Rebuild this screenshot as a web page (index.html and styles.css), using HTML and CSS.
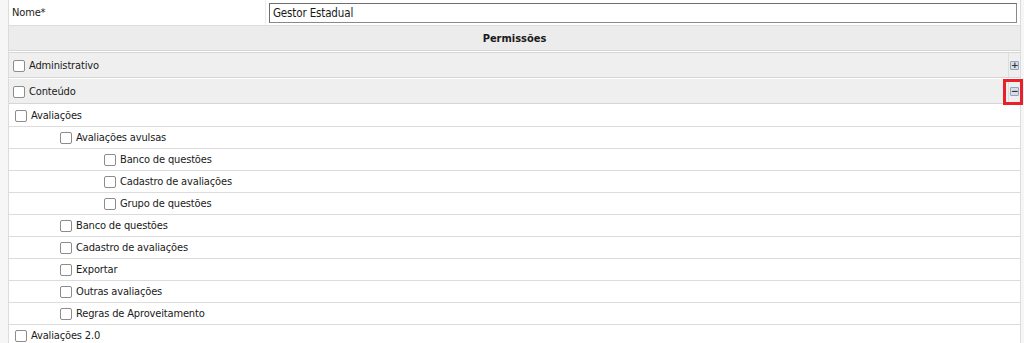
FILE: index.html
```html
<!DOCTYPE html>
<html>

<head>
    <title>Perfil</title>
    <meta name="viewport" content="width=device-width, initial-scale=1">
    <link rel="stylesheet" href="styles.css">
</head>

<body>
    <div class="page">
        <div class="form-row">
            <div class="label-cell">Nome*</div>
            <div class="value-cell">
                <input class="text-input" type="text" value="Gestor Estadual">
            </div>
        </div>

        <div class="section-title">Permissões</div>

        <div class="group-row">
            <label class="group-label"><span class="check"></span>Administrativo</label>
            <div class="toggle-cell"><span class="toggle">+</span></div>
        </div>

        <div class="group-row">
            <label class="group-label"><span class="check"></span>Conteúdo</label>
            <div class="toggle-cell">
                <span class="toggle">−</span>
                <span class="highlight"></span>
            </div>
        </div>

        <div class="tree">
            <div class="item lvl0"><span class="check"></span>Avaliações</div>
            <div class="item lvl1"><span class="check"></span>Avaliações avulsas</div>
            <div class="item lvl2"><span class="check"></span>Banco de questões</div>
            <div class="item lvl2"><span class="check"></span>Cadastro de avaliações</div>
            <div class="item lvl2"><span class="check"></span>Grupo de questões</div>
            <div class="item lvl1"><span class="check"></span>Banco de questões</div>
            <div class="item lvl1"><span class="check"></span>Cadastro de avaliações</div>
            <div class="item lvl1"><span class="check"></span>Exportar</div>
            <div class="item lvl1"><span class="check"></span>Outras avaliações</div>
            <div class="item lvl1"><span class="check"></span>Regras de Aproveitamento</div>
            <div class="item lvl0"><span class="check"></span>Avaliações 2.0</div>
        </div>
    </div>
</body>

</html>
```

FILE: styles.css
```css
html,
body {
    margin: 0;
    padding: 0;
    height: 100%;
    overflow: hidden;
}

body {
    background-color: #f6f6f6;
    font-family: "DejaVu Sans Condensed", "DejaVu Sans", sans-serif;
    font-size: 11px;
    letter-spacing: -0.15px;
    color: #1a1a1a;
}

.page {
    margin-left: 8px;
    width: 1011px;
    border-left: 1px solid #dcdcdc;
    border-right: 1px solid #dcdcdc;
    background-color: #fff;
    min-height: 100%;
}

.form-row {
    display: flex;
    height: 25px;
    border-bottom: 1px solid #dedede;
}

.label-cell {
    width: 253px;
    padding-left: 3px;
    display: flex;
    align-items: center;
    border-right: 1px solid #ececec;
}

.value-cell {
    flex: 1;
    display: flex;
    align-items: center;
    padding-left: 3px;
    padding-right: 3px;
}

.text-input {
    width: 100%;
    height: 20px;
    box-sizing: border-box;
    margin: 0;
    padding: 0 3px;
    border: 1px solid #8a8a8a;
    border-top-color: #6e6e6e;
    border-left-color: #6e6e6e;
    font-family: inherit;
    font-size: 11.5px;
    letter-spacing: -0.15px;
    color: #1a1a1a;
}

.section-title {
    height: 22px;
    padding-top: 2px;
    line-height: 22px;
    text-align: center;
    font-weight: bold;
    letter-spacing: 0;
    background-color: #ececec;
    border-bottom: 1px solid #d6d6d6;
    margin-bottom: 1px;
    box-shadow: 0 1px 0 #fff;
}

.group-row {
    display: flex;
    height: 24px;
    background-color: #efefef;
    border-top: 1px solid #d6d6d6;
    border-bottom: 1px solid #d6d6d6;
}

.group-row + .group-row {
    border-top: 1px solid #fff;
}

.group-label {
    flex: 1;
    display: flex;
    align-items: center;
    padding-left: 4px;
    padding-top: 1px;
}

.toggle-cell {
    width: 11px;
    display: flex;
    align-items: center;
    justify-content: center;
    border-left: 1px solid #dedede;
    position: relative;
}

.toggle {
    width: 7px;
    height: 7px;
    border: 1px solid #8ea4bf;
    border-radius: 1px;
    background-color: #d8dde4;
    color: #333;
    font-size: 9px;
    font-weight: bold;
    line-height: 7px;
    text-align: center;
    letter-spacing: 0;
    font-family: "DejaVu Sans", sans-serif;
}

.highlight {
    position: absolute;
    left: -6px;
    top: 0;
    width: 14px;
    height: 20px;
    border: 3px solid #e8202a;
}

.check {
    display: inline-block;
    width: 10px;
    height: 10px;
    border: 1px solid #8c8c8c;
    border-radius: 2px;
    background-color: #fff;
    margin-right: 4px;
    flex-shrink: 0;
}

.tree {
    padding-top: 1px;
}

.item {
    display: flex;
    align-items: center;
    height: 21px;
    border-bottom: 1px solid #dcdcdc;
}

.lvl0 {
    padding-left: 6px;
}

.lvl1 {
    padding-left: 51px;
}

.lvl2 {
    padding-left: 95px;
}
```
